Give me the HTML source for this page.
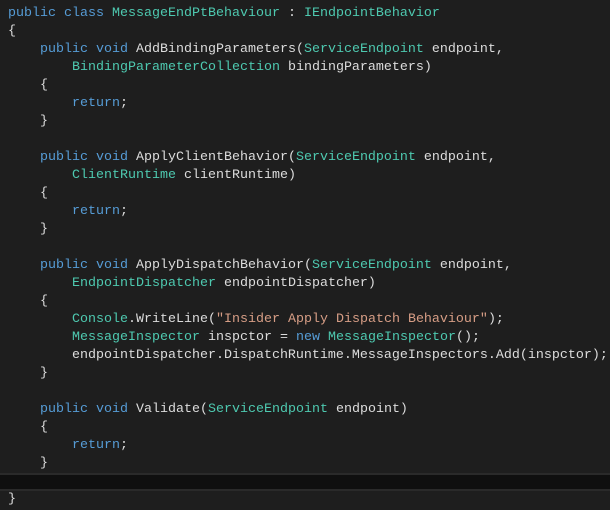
<!DOCTYPE html><html><head><style>
body{margin:0;width:610px;height:510px;background:#1e1e1e;overflow:hidden}
pre{margin:0;position:absolute;left:8px;top:5px;font-family:"Liberation Mono",monospace;font-size:13.33px;line-height:18px;color:#dcdcdc}
.k{color:#569cd6}.t{color:#4ec9b0}.s{color:#d69d85}
.hl{position:absolute;left:0;top:473px;width:610px;height:14px;background:#0f0f0f;border-top:2px solid #2a2a2a;border-bottom:2px solid #2a2a2a}
</style></head><body><div class="hl"></div><pre><span class="k">public class</span> <span class="t">MessageEndPtBehaviour</span> : <span class="t">IEndpointBehavior</span>
{
    <span class="k">public void</span> AddBindingParameters(<span class="t">ServiceEndpoint</span> endpoint,
        <span class="t">BindingParameterCollection</span> bindingParameters)
    {
        <span class="k">return</span>;
    }

    <span class="k">public void</span> ApplyClientBehavior(<span class="t">ServiceEndpoint</span> endpoint,
        <span class="t">ClientRuntime</span> clientRuntime)
    {
        <span class="k">return</span>;
    }

    <span class="k">public void</span> ApplyDispatchBehavior(<span class="t">ServiceEndpoint</span> endpoint,
        <span class="t">EndpointDispatcher</span> endpointDispatcher)
    {
        <span class="t">Console</span>.WriteLine(<span class="s">"Insider Apply Dispatch Behaviour"</span>);
        <span class="t">MessageInspector</span> inspctor = <span class="k">new</span> <span class="t">MessageInspector</span>();
        endpointDispatcher.DispatchRuntime.MessageInspectors.Add(inspctor);
    }

    <span class="k">public void</span> Validate(<span class="t">ServiceEndpoint</span> endpoint)
    {
        <span class="k">return</span>;
    }

}</pre></body></html>
